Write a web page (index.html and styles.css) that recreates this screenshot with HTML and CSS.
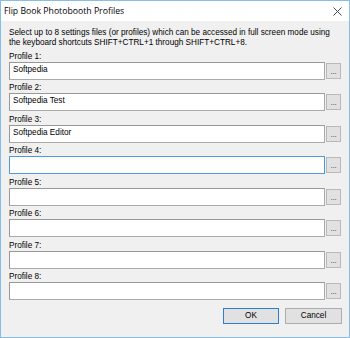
FILE: index.html
```html
<!DOCTYPE html>
<html>
<head>
<meta charset="utf-8">
<link rel="stylesheet" href="styles.css">
</head>
<body>
<div class="window">
  <div class="titlebar">
    <span class="title">Flip Book Photobooth Profiles</span>
    <svg class="close" width="9" height="9" viewBox="0 0 9 9"><path d="M0.5 0.5 L8.5 8.5 M8.5 0.5 L0.5 8.5" stroke="#333" stroke-width="0.9" fill="none"/></svg>
  </div>
  <div class="content">
    <p class="desc">Select up to 8 settings files (or profiles) which can be accessed in full screen mode using<br>the keyboard shortcuts SHIFT+CTRL+1 through SHIFT+CTRL+8.</p>
    <div class="rows">
      <div class="row"><div class="label">Profile 1:</div><div class="line"><div class="field">Softpedia</div><div class="browse">...</div></div></div>
      <div class="row"><div class="label">Profile 2:</div><div class="line"><div class="field">Softpedia Test</div><div class="browse">...</div></div></div>
      <div class="row"><div class="label">Profile 3:</div><div class="line"><div class="field">Softpedia Editor</div><div class="browse">...</div></div></div>
      <div class="row"><div class="label">Profile 4:</div><div class="line"><div class="field focus"></div><div class="browse">...</div></div></div>
      <div class="row"><div class="label">Profile 5:</div><div class="line"><div class="field"></div><div class="browse">...</div></div></div>
      <div class="row"><div class="label">Profile 6:</div><div class="line"><div class="field"></div><div class="browse">...</div></div></div>
      <div class="row"><div class="label">Profile 7:</div><div class="line"><div class="field"></div><div class="browse">...</div></div></div>
      <div class="row"><div class="label">Profile 8:</div><div class="line"><div class="field"></div><div class="browse">...</div></div></div>
    </div>
    <div class="buttons">
      <div class="btn default">OK</div>
      <div class="btn cancel">Cancel</div>
    </div>
  </div>
</div>
</body>
</html>
```
FILE: styles.css
```css
html, body {
  margin: 0;
  padding: 0;
  background: #f0f0f0;
}
.window {
  box-sizing: border-box;
  width: 350px;
  height: 338px;
  border: 1px solid #86bde9;
  background: #f0f0f0;
  display: flex;
  flex-direction: column;
  font-family: "Liberation Sans", Arial, sans-serif;
  color: #000;
}
.titlebar {
  height: 20px;
  background: #fff;
  display: flex;
  align-items: center;
  justify-content: space-between;
  padding: 0 7px 0 3px;
}
.title {
  font-family: "Open Sans", "Noto Sans", sans-serif;
  font-size: 8.7px;
  color: #000;
}
.close {
  display: block;
}
.content {
  padding: 7px 7px 0 8px;
  font-size: 8.2px;
}
.desc {
  margin: 0;
  line-height: 10px;
  white-space: nowrap;
}
.rows {
  margin-top: 4px;
}
.row {
  margin-bottom: 3.43px;
}
.label {
  height: 10px;
  line-height: 10px;
}
.line {
  display: flex;
  height: 18px;
}
.field {
  box-sizing: border-box;
  width: 316px;
  height: 18px;
  background: #fff;
  border: 1px solid #999;
  border-right-color: #aaa;
  border-bottom-color: #aaa;
  padding: 0 3px;
  line-height: 14px;
}
.field.focus {
  border-color: #4c9be0;
}
.browse {
  box-sizing: border-box;
  width: 15px;
  height: 16px;
  margin-left: 1px;
  margin-top: 1px;
  background: #e1e1e1;
  border: 1px solid #b9b9b9;
  font-size: 8px;
  line-height: 15px;
  text-align: center;
  letter-spacing: -0.3px;
  color: #333;
}
.buttons {
  display: flex;
  justify-content: flex-end;
  gap: 6px;
  margin-top: 7.6px;
}
.btn {
  box-sizing: border-box;
  width: 56px;
  height: 16px;
  background: #e1e1e1;
  border: 1px solid #adadad;
  text-align: center;
  line-height: 14px;
}
.btn.default {
  border-color: #2a7fd4;
}
.btn.cancel {
  width: 57px;
}
```
